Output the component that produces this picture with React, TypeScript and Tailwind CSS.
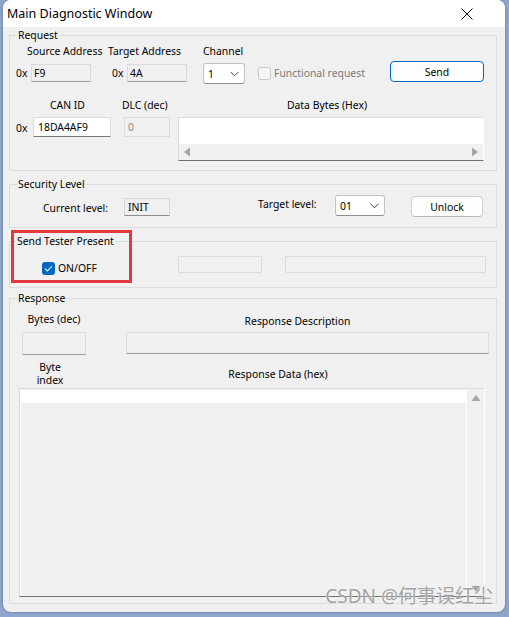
import React from "react";

function Chevron() {
  return (
    <svg width="9" height="6" viewBox="0 0 9 6" className="block">
      <polyline points="0.5,0.8 4.5,4.8 8.5,0.8" fill="none" stroke="#444" strokeWidth="1" />
    </svg>
  );
}

function Tri({ dir }: { dir: "left" | "right" | "up" | "down" }) {
  const pts =
    dir === "left"
      ? "7,0 7,9 1,4.5"
      : dir === "right"
      ? "1,0 1,9 7,4.5"
      : dir === "up"
      ? "0,7 9,7 4.5,1"
      : "0,1 9,1 4.5,7";
  const h = dir === "left" || dir === "right";
  return (
    <svg width={h ? 8 : 10} height={h ? 10 : 8} viewBox={h ? "0 0 8 9" : "0 0 9 8"} className="block">
      <polygon points={pts} fill="#a3a3a3" />
    </svg>
  );
}

export default function App() {
  return (
    <div className="w-[509px] h-[617px] bg-[#8fa6cc] pl-[3px] pr-[4px] pb-[5px] font-['Noto_Sans',sans-serif] text-[10.4px] leading-[16px] text-black">
      <div className="relative h-[612px] flex flex-col rounded-[8px] overflow-hidden bg-[#f0f0f0] shadow-[0_0_3px_rgba(0,0,0,0.35)]">
        {/* Title bar */}
        <div className="h-[27px] bg-white flex items-center justify-between pl-[4px] pr-[32px] shrink-0">
          <span className="text-[12.5px] leading-[16px]">Main Diagnostic Window</span>
          <svg width="12" height="12" viewBox="0 0 12 12" className="block">
            <line x1="0.5" y1="0.5" x2="11.5" y2="11.5" stroke="#111" strokeWidth="1" />
            <line x1="11.5" y1="0.5" x2="0.5" y2="11.5" stroke="#111" strokeWidth="1" />
          </svg>
        </div>

        {/* Body */}
        <div className="flex-1 flex flex-col pl-[6px] pr-[8px]">
          {/* Request */}
          <fieldset className="border border-[#dcdcdc] pb-[9px]">
            <legend className="ml-[7px] px-[1px] leading-[16px]">Request</legend>
            <div className="flex h-[16px]">
              <span className="ml-[17px] w-[81px] whitespace-nowrap">Source Address</span>
              <span className="w-[95px] whitespace-nowrap">Target Address</span>
              <span>Channel</span>
            </div>
            <div className="flex items-start mt-[2px] h-[22px]">
              <span className="ml-[6px] w-[15px] mt-[4px]">0x</span>
              <div className="w-[60px] h-[18px] mt-[3px] border border-[#dadada] border-b-[#9a9a9a] bg-[#f0f0f0] pl-[2px] leading-[16px]">F9</div>
              <span className="ml-[21px] w-[15px] mt-[4px]">0x</span>
              <div className="w-[60px] h-[18px] mt-[3px] border border-[#dadada] border-b-[#9a9a9a] bg-[#f0f0f0] pl-[2px] leading-[16px]">4A</div>
              <div className="ml-[16px] w-[42px] h-[21px] mt-[2px] border border-[#c2c2c2] border-b-[#8e8e8e] rounded-[3px] bg-white flex items-center justify-between pl-[4px] pr-[5px]">
                <span>1</span>
                <Chevron />
              </div>
              <div className="ml-[13px] w-[13px] h-[13px] mt-[6px] border border-[#c8c8c8] rounded-[3px] bg-[#f7f7f7]" />
              <span className="ml-[3px] mt-[4px] text-[#7a7a7a] whitespace-nowrap">Functional request</span>
              <div className="ml-auto mr-[12px] w-[94px] h-[21px] border border-[#0067c0] rounded-[4px] bg-[#fdfdfd] flex items-center justify-center">Send</div>
            </div>
            <div className="flex mt-[14px] h-[16px]">
              <span className="ml-[40px] w-[72px]">CAN ID</span>
              <span className="w-[56px] whitespace-nowrap">DLC (dec)</span>
              <span className="w-[298px] text-center">Data Bytes (Hex)</span>
            </div>
            <div className="flex items-start mt-[4px]">
              <span className="ml-[6px] w-[17px] mt-[3px]">0x</span>
              <div className="w-[78px] h-[20px] border border-[#dcdcdc] border-b-[#7a7a7a] bg-white pl-[4px] leading-[18px]">18DA4AF9</div>
              <div className="ml-[13px] w-[46px] h-[20px] border border-[#dcdcdc] bg-[#f0f0f0] pl-[3px] leading-[18px] text-[#8a8a8a]">0</div>
              <div className="ml-[8px] w-[306px] h-[44px] border border-[#dcdcdc] border-r-white border-b-[#707070] flex flex-col">
                <div className="flex-1 bg-white" />
                <div className="h-[16px] bg-[#f0f0f0] flex items-center justify-between pl-[4px] pr-[4px]">
                  <Tri dir="left" />
                  <Tri dir="right" />
                </div>
              </div>
            </div>
          </fieldset>

          {/* Security Level */}
          <fieldset className="mt-[5px] border border-[#dcdcdc] pb-[10px]">
            <legend className="ml-[7px] px-[1px] leading-[16px]">Security Level</legend>
            <div className="flex items-start">
              <span className="ml-[33px] w-[81px] mt-[8px] whitespace-nowrap">Current level:</span>
              <div className="w-[46px] h-[18px] mt-[6px] border border-[#d8d8d8] border-b-[#8c8c8c] bg-[#f0f0f0] pl-[3px] leading-[16px]">INIT</div>
              <span className="ml-[88px] w-[77px] mt-[4px] whitespace-nowrap">Target level:</span>
              <div className="w-[50px] h-[21px] mt-[3px] border border-[#c2c2c2] border-b-[#8e8e8e] rounded-[3px] bg-white flex items-center justify-between pl-[4px] pr-[5px]">
                <span>01</span>
                <Chevron />
              </div>
              <div className="ml-[26px] w-[72px] h-[21px] mt-[4px] border border-[#d0d0d0] border-b-[#b8b8b8] rounded-[4px] bg-[#fdfdfd] flex items-center justify-center">Unlock</div>
            </div>
          </fieldset>

          {/* Send Tester Present */}
          <div className="relative mt-[5px]">
            <fieldset className="border border-[#dcdcdc] pb-[11px]">
              <legend className="ml-[6px] px-[1px] leading-[16px]">Send Tester Present</legend>
              <div className="flex items-start">
                <div className="ml-[32px] mt-[13px] w-[13px] h-[13px] rounded-[3px] bg-[#0067c0] flex items-center justify-center">
                  <svg width="9" height="7" viewBox="0 0 9 7" className="block">
                    <polyline points="1,3.6 3.4,6 8,1" fill="none" stroke="white" strokeWidth="1.1" />
                  </svg>
                </div>
                <span className="ml-[3px] w-[120px] mt-[11px]">ON/OFF</span>
                <div className="w-[84px] h-[17px] mt-[7px] border border-[#dcdcdc] bg-[#f0f0f0]" />
                <div className="ml-[23px] w-[201px] h-[17px] mt-[7px] border border-[#dcdcdc] bg-[#f0f0f0]" />
              </div>
            </fieldset>
            <div className="absolute left-[2px] top-[-3px] w-[121px] h-[53px] border-[3px] border-[#e3393c] pointer-events-none" />
          </div>

          {/* Response */}
          <fieldset className="mt-[2px] border border-[#dcdcdc] pb-[6px]">
            <legend className="ml-[7px] px-[1px] leading-[16px]">Response</legend>
            <div className="flex items-start">
              <span className="ml-[12px] w-[64px] text-center mt-[5px] whitespace-nowrap">Bytes (dec)</span>
              <span className="ml-[40px] w-[343px] text-center mt-[7px] whitespace-nowrap">Response Description</span>
            </div>
            <div className="flex items-start mt-[3px]">
              <div className="ml-[12px] w-[64px] h-[23px] border border-[#dcdcdc] border-b-[#9a9a9a] bg-[#f0f0f0]" />
              <div className="ml-[40px] w-[363px] h-[22px] border border-[#dcdcdc] border-b-[#9a9a9a] bg-[#f0f0f0]" />
            </div>
            <div className="flex items-center mt-[6px]">
              <div className="ml-[10px] w-[60px] flex flex-col items-center">
                <span className="leading-[13px]">Byte</span>
                <span className="leading-[13px]">index</span>
              </div>
              <span className="w-[396px] text-center">Response Data (hex)</span>
            </div>
            <div className="ml-[9px] mt-[1px] w-[466px] h-[209px] border border-[#d9d9d9] border-r-white border-b-[#707070] flex">
              <div className="flex-1 border-l border-white pt-[1px]">
                <div className="h-[13px] bg-white" />
              </div>
              <div className="w-[18px] border-l border-white flex flex-col items-center justify-between pt-[5px] pb-[3px]">
                <Tri dir="up" />
                <Tri dir="down" />
              </div>
            </div>
          </fieldset>
        </div>

        {/* Watermark */}
        <span className="absolute right-[12px] bottom-[5px] text-[19px] leading-[22px] text-[#a3a3a3] font-['Noto_Sans','Noto_Sans_CJK_SC',sans-serif] [text-shadow:0_0_2px_white]">
          CSDN @何事误红尘
        </span>
      </div>
    </div>
  );
}
